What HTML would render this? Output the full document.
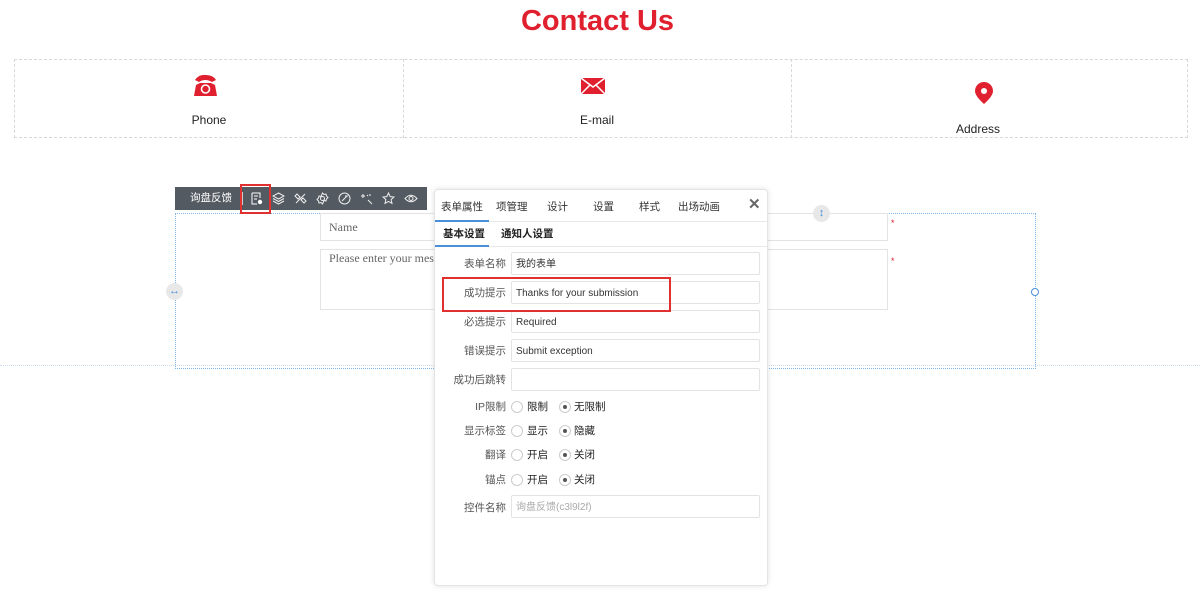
<!DOCTYPE html>
<html><head><meta charset="utf-8"><style>
*{box-sizing:border-box;margin:0;padding:0}
body{width:1200px;height:603px;background:#fff;font-family:"Liberation Sans","Noto Sans CJK SC",sans-serif;position:relative;overflow:hidden;color:#333}
.a{position:absolute;line-height:1.2}
.title{left:0;width:1195px;top:4px;text-align:center;color:#e0202e;font-weight:bold;font-size:29px}
.cbox{left:14px;top:59px;width:1174px;height:79px;border:1px dashed #d8d8d8}
.div{top:59px;height:79px;border-left:1px dashed #d8d8d8}
.lbl{font-size:12px;color:#222;text-align:center;width:120px}
.tb{left:175px;top:187px;width:252px;height:23px;background:#545a61;color:#fff;font-size:10.5px}
.sel{left:175px;top:213px;width:861px;height:156px;border:1px dotted #7fb6e6}
.inp{border:1px solid #e3e3e3;background:#fff}
.ser{font-family:"Liberation Serif",serif;font-size:12px;color:#666}
.panel{left:434px;top:189px;width:334px;height:397px;background:#fff;border:1px solid #e4e4e4;border-radius:4px;box-shadow:0 0 6px rgba(0,0,0,.12)}
.tab{top:11px;font-size:10.5px;color:#333}
.row{font-size:10.5px;color:#555}
.rl{width:71px;text-align:right}
.fi{left:76px;width:249px;height:23px;border:1px solid #e3e3e3;border-radius:2px;font-size:10px;color:#333;padding:6px 4px 0}
.rad{width:12px;height:12px;border:1px solid #ccc;border-radius:50%;background:#fff}
.rad.on::after{content:"";position:absolute;left:3px;top:3px;width:4px;height:4px;border-radius:50%;background:#555}
.ic{position:absolute;top:5px}
</style></head><body>
<div class="a title">Contact Us</div>
<div class="a cbox"></div>
<div class="a div" style="left:403px"></div>
<div class="a div" style="left:791px"></div>
<svg class="a" style="left:193px;top:74px" width="25" height="24" viewBox="0 0 25 24"><path d="M2 6 Q6 0 13 1 Q20 1 23 6 L19 8 Q12 4 6 8Z" fill="#e0202e"/><path d="M3 11 L7 9 L18 9 L22 11 L24 22 L1 22Z" fill="#e0202e"/><circle cx="12.5" cy="15" r="4" fill="none" stroke="#fff" stroke-width="1.6"/></svg>
<div class="a lbl" style="left:149px;top:113px">Phone</div>
<svg class="a" style="left:581px;top:78px" width="24" height="16" viewBox="0 0 24 16"><rect width="24" height="16" fill="#e0202e"/><path d="M0 0 L12 9 L24 0 M0 16 L9 7 M24 16 L15 7" stroke="#fff" stroke-width="1.5" fill="none"/></svg>
<div class="a lbl" style="left:537px;top:113px">E-mail</div>
<svg class="a" style="left:975px;top:82px" width="18" height="22" viewBox="0 0 18 22"><path d="M9 0 A9 9 0 0 1 18 9 Q18 14 9 22 Q0 14 0 9 A9 9 0 0 1 9 0Z" fill="#e0202e"/><circle cx="9" cy="9" r="3" fill="#fff"/></svg>
<div class="a lbl" style="left:918px;top:122px">Address</div>

<div class="a" style="left:0;top:365px;width:1200px;border-top:1px dotted #cde"></div>
<div class="a sel"></div>
<div class="a inp" style="left:320px;top:213px;width:568px;height:28px"><span class="a ser" style="left:8px;top:6px">Name</span></div>
<div class="a inp" style="left:320px;top:249px;width:568px;height:61px"><span class="a ser" style="left:8px;top:1px">Please enter your message</span></div>
<div class="a" style="left:891px;top:218px;color:#e0202e;font-size:9px">*</div>
<div class="a" style="left:891px;top:256px;color:#e0202e;font-size:9px">*</div>
<div class="a" style="left:813px;top:205px;width:17px;height:17px;border-radius:50%;background:#e8e8e8;color:#4a90d9;font-size:11px;text-align:center;line-height:17px">↕</div>
<div class="a" style="left:166px;top:283px;width:17px;height:17px;border-radius:50%;background:#e8e8e8;color:#4a90d9;font-size:11px;text-align:center;line-height:17px">↔</div>
<div class="a" style="left:1031px;top:288px;width:8px;height:8px;border-radius:50%;border:1px solid #4a90d9;background:#fff"></div>

<div class="a tb"><span class="a" style="left:15px;top:5px">询盘反馈</span><span class="a" style="left:67px;top:5px;width:1px;height:13px;background:#ccc"></span>
<svg class="ic" style="left:76px" width="12" height="13" viewBox="0 0 12 13"><path d="M1 1h8v5M1 1v11h5M3 4h4M3 7h3" stroke="#fff" fill="none"/><circle cx="9" cy="10" r="2.2" fill="#fff"/></svg>
<svg class="ic" style="left:97px" width="13" height="13" viewBox="0 0 13 13" fill="none" stroke="#eee"><path d="M6.5 1L12 4 6.5 7 1 4Z M1 6.5l5.5 3 5.5-3M1 9l5.5 3 5.5-3"/></svg>
<svg class="ic" style="left:119px" width="13" height="13" viewBox="0 0 13 13" fill="none" stroke="#eee"><path d="M2 11L11 2M3 2l3 3-2 2-3-3zM10 11l-3-3 2-2 3 3z"/></svg>
<svg class="ic" style="left:141px" width="13" height="13" viewBox="0 0 13 13" fill="none" stroke="#eee"><circle cx="6.5" cy="6.5" r="2"/><path d="M6.5 1l1.5 1.5 2-.5.5 2 1.5 1.5-1.5 1.5-.5 2-2-.5L6.5 12 5 10.5l-2 .5-.5-2L1 7.5 2.5 6 3 4l2 .5z"/></svg>
<svg class="ic" style="left:163px" width="13" height="13" viewBox="0 0 13 13" fill="none" stroke="#eee"><circle cx="6.5" cy="6.5" r="5.5"/><path d="M4 9l5-5M7 4l3 0"/></svg>
<svg class="ic" style="left:185px" width="13" height="13" viewBox="0 0 13 13" fill="none" stroke="#eee"><path d="M3 2v4M1 4h4M8 8l4 4M7 3l1 1M10 2v2"/></svg>
<svg class="ic" style="left:207px" width="13" height="13" viewBox="0 0 13 13" fill="none" stroke="#eee"><path d="M6.5 1l1.7 3.6 3.8.4-2.9 2.6.9 3.8-3.5-2-3.5 2 .9-3.8L1 5l3.8-.4z"/></svg>
<svg class="ic" style="left:229px" width="14" height="13" viewBox="0 0 14 13" fill="none" stroke="#eee"><path d="M1 6.5Q7 0 13 6.5Q7 13 1 6.5Z"/><circle cx="7" cy="6.5" r="2"/></svg>
</div>
<div class="a" style="left:240px;top:184px;width:31px;height:30px;border:2px solid #e03030"></div>

<div class="a panel">
<span class="a tab" style="left:6px">表单属性</span><span class="a tab" style="left:61px">项管理</span><span class="a tab" style="left:112px">设计</span><span class="a tab" style="left:158px">设置</span><span class="a tab" style="left:204px">样式</span><span class="a tab" style="left:243px">出场动画</span>
<span class="a" style="left:313px;top:6px;font-size:15px;color:#666;font-weight:bold">✕</span>
<div class="a" style="left:0;top:31px;width:332px;border-top:1px solid #e8e8e8"></div>
<div class="a" style="left:0;top:30px;width:54px;border-top:2px solid #4a90d9"></div>
<span class="a" style="left:8px;top:38px;font-size:10.5px;color:#222;font-weight:bold">基本设置</span><span class="a" style="left:66px;top:38px;font-size:10.5px;color:#222;font-weight:bold">通知人设置</span>
<div class="a" style="left:0;top:56px;width:332px;border-top:1px solid #e8e8e8"></div>
<div class="a" style="left:0;top:55px;width:54px;border-top:2px solid #4a90d9"></div>

<div class="a row rl" style="left:0;top:68px">表单名称</div><div class="a fi" style="top:62px">我的表单</div>
<div class="a row rl" style="left:0;top:97px">成功提示</div><div class="a fi" style="top:91px">Thanks for your submission</div>
<div class="a row rl" style="left:0;top:126px">必选提示</div><div class="a fi" style="top:120px">Required</div>
<div class="a row rl" style="left:0;top:155px">错误提示</div><div class="a fi" style="top:149px">Submit exception</div>
<div class="a row rl" style="left:0;top:184px">成功后跳转</div><div class="a fi" style="top:178px"></div>
<div class="a row rl" style="left:0;top:211px">IP限制</div><div class="a rad" style="left:76px;top:211px"></div><span class="a row" style="left:92px;top:211px;color:#222">限制</span><div class="a rad on" style="left:124px;top:211px"></div><span class="a row" style="left:139px;top:211px;color:#222">无限制</span>
<div class="a row rl" style="left:0;top:235px">显示标签</div><div class="a rad" style="left:76px;top:235px"></div><span class="a row" style="left:92px;top:235px;color:#222">显示</span><div class="a rad on" style="left:124px;top:235px"></div><span class="a row" style="left:139px;top:235px;color:#222">隐藏</span>
<div class="a row rl" style="left:0;top:259px">翻译</div><div class="a rad" style="left:76px;top:259px"></div><span class="a row" style="left:92px;top:259px;color:#222">开启</span><div class="a rad on" style="left:124px;top:259px"></div><span class="a row" style="left:139px;top:259px;color:#222">关闭</span>
<div class="a row rl" style="left:0;top:284px">锚点</div><div class="a rad" style="left:76px;top:284px"></div><span class="a row" style="left:92px;top:284px;color:#222">开启</span><div class="a rad on" style="left:124px;top:284px"></div><span class="a row" style="left:139px;top:284px;color:#222">关闭</span>
<div class="a row rl" style="left:0;top:312px">控件名称</div><div class="a fi" style="top:305px;color:#aaa">询盘反馈(c3l9l2f)</div>
</div>
<div class="a" style="left:442px;top:277px;width:229px;height:35px;border:2px solid #e03030"></div>
</body></html>
